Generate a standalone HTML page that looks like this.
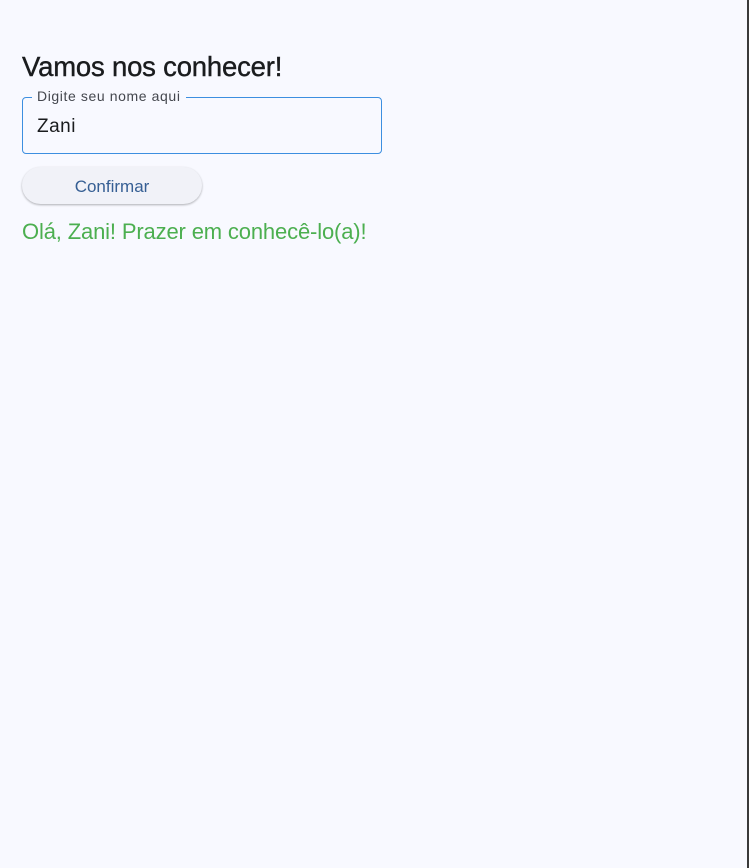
<!DOCTYPE html>
<html><head><style>
html,body{margin:0;padding:0;}
body{width:749px;height:868px;background:#f8f9ff;position:relative;overflow:hidden;font-family:"Liberation Sans",Arial,sans-serif;}
.edge{position:absolute;right:0;top:0;width:2px;height:868px;background:#3a3a3a;}
h1{position:absolute;left:22px;top:51px;margin:0;font-size:27.5px;font-weight:normal;color:#1a1c1e;letter-spacing:-0.2px;-webkit-text-stroke:0.4px #1a1c1e;}
.box{position:absolute;left:22px;top:97px;width:358px;height:55px;border:1px solid #3d8fe0;border-radius:4px;}
.lbl{position:absolute;left:32px;top:88px;padding:0 5px;background:#f8f9ff;font-size:14px;color:#44474e;letter-spacing:0.6px;}
.val{position:absolute;left:37px;top:116px;font-size:19px;color:#1a1c1e;letter-spacing:0.5px;}
.btn{position:absolute;left:22px;top:167px;width:180px;height:37px;border-radius:19px;background:#f1f2f8;box-shadow:0 1px 2px rgba(0,0,0,0.3);text-align:center;line-height:39px;font-size:17px;color:#365f94;}
.msg{position:absolute;left:22px;top:219px;font-size:22px;color:#4caf50;letter-spacing:-0.15px;}
</style></head><body>
<div class="edge"></div>
<h1>Vamos nos conhecer!</h1>
<div class="box"></div>
<div class="lbl">Digite seu nome aqui</div>
<div class="val">Zani</div>
<div class="btn">Confirmar</div>
<div class="msg">Olá, Zani! Prazer em conhecê-lo(a)!</div>
</body></html>
